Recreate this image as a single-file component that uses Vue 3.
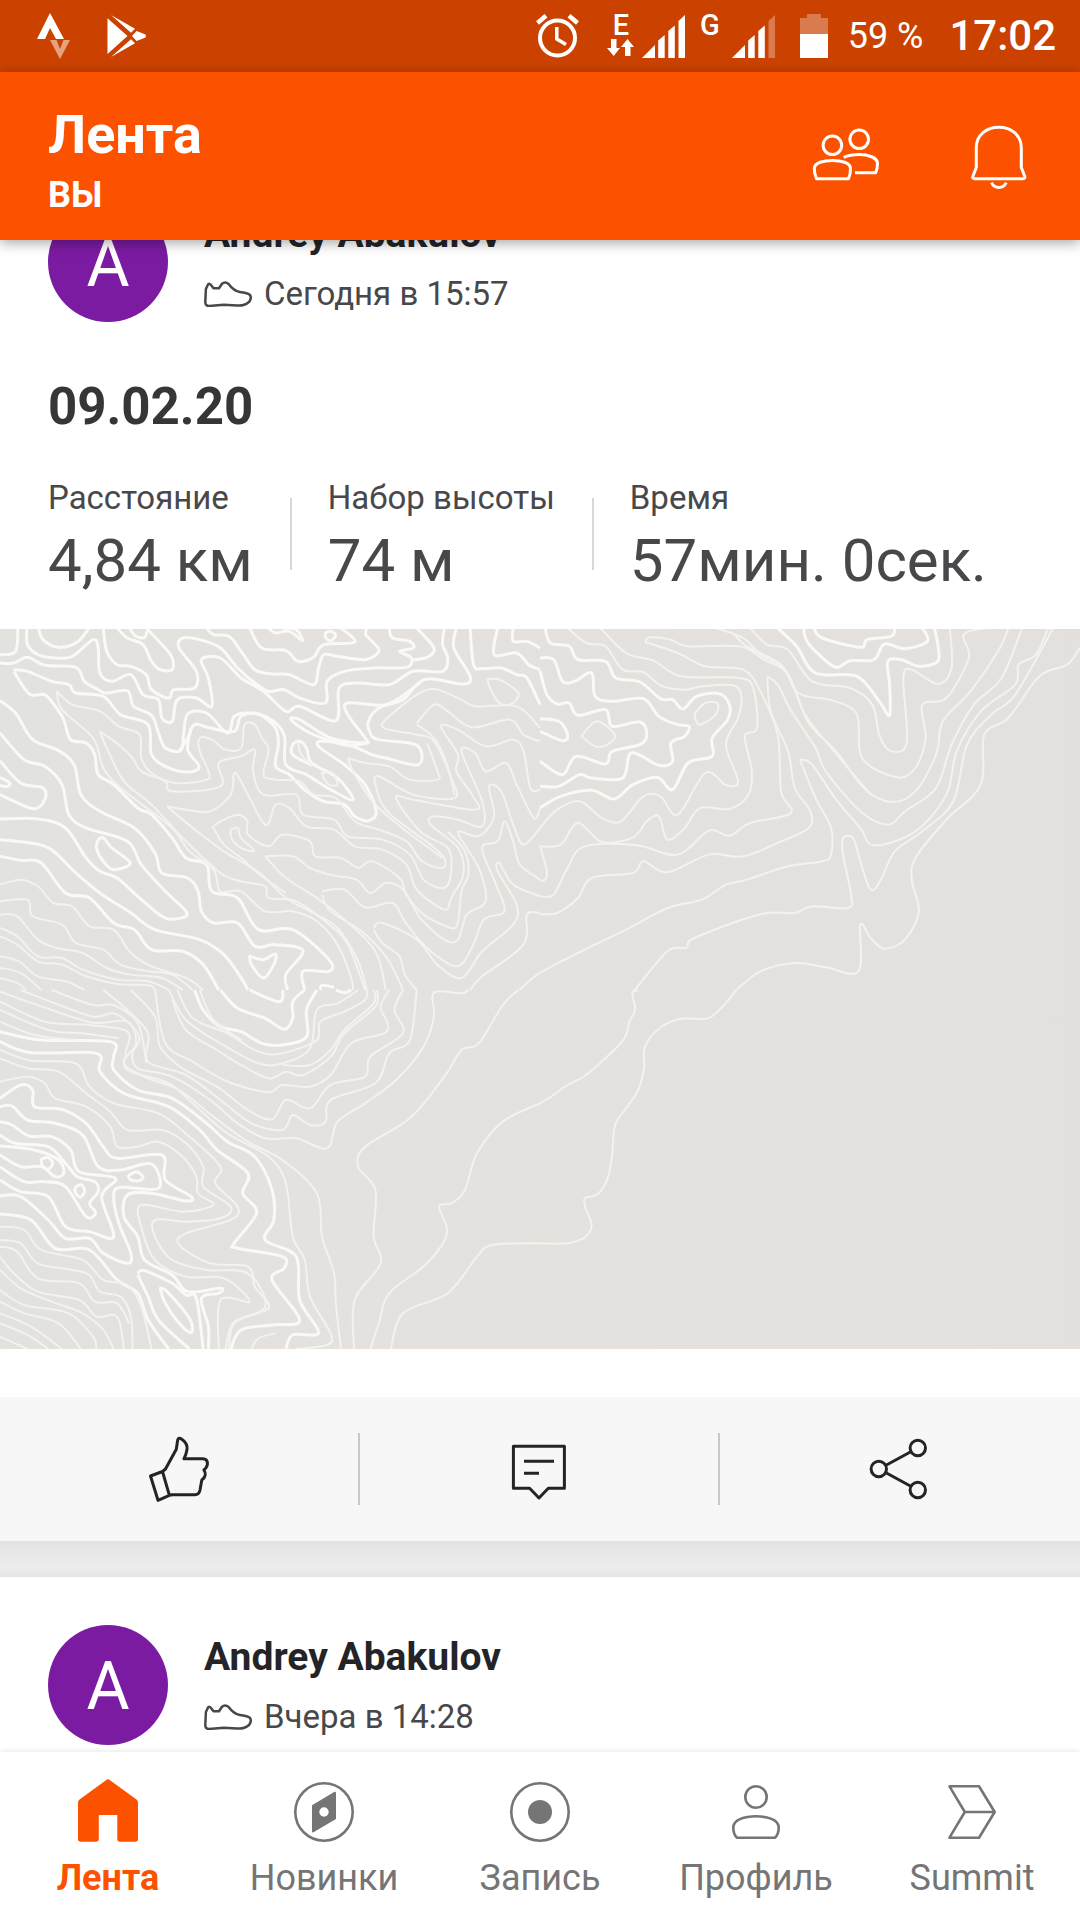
<template>
  <div class="app">
    <div class="status-bar">
      <div class="status-group">
        <svg class="strava" viewBox="0 0 36 48" aria-hidden="true">
          <path d="M1 27 14 1 28 27H20L14 16 9 27Z" fill="#fff" />
          <path d="M14 28H20.500L24 37 27.500 28H34L24 47Z" fill="#fff" opacity=".5" />
        </svg>
        <svg class="play" viewBox="0 0 40 44" aria-hidden="true">
          <path d="M.5 4.300V40L20.500 22ZM4 1 28 14.700 24 18.700ZM4 43 28 29.300 24 25.300ZM25 22 29.500 17 38 20.300Q40 22 38 23.700L29.500 27Z" fill="#fff" />
        </svg>
      </div>
      <div class="status-group">
        <svg class="alarm" viewBox="0 0 43 44" fill="none" stroke="#fff" aria-hidden="true">
          <circle cx="21.500" cy="24" r="17.500" stroke-width="4" />
          <path d="M20.800 13V25L30 30.500" stroke-width="3.500" />
          <path d="M1.500 9 10 1.800M41.500 9 33 1.800" stroke-width="4.500" />
        </svg>
        <div class="network network-data">
          <span>E</span>
          <svg viewBox="0 0 28 17" fill="#fff" aria-hidden="true">
            <path d="M4 0H9.500V9H13L6.700 17 0 9H4ZM18 17H23.500V8H27L20.500 0 14 8H18Z" />
          </svg>
        </div>
        <svg class="signal" viewBox="0 0 43 43" fill="#fff" aria-hidden="true">
          <path v-for="bar in signalBars" :key="bar" :d="bar" />
        </svg>
        <div class="network network-roaming"><span>G</span></div>
        <svg class="signal" viewBox="0 0 43 43" fill="#fff" aria-hidden="true">
          <path v-for="(bar, i) in signalBars" :key="bar" :d="bar" :opacity="i === 3 ? 0.3 : 1" />
        </svg>
        <svg class="battery" viewBox="0 0 28 44" fill="#fff" aria-hidden="true">
          <path d="M0 4H7V0H21V4H28V20H0Z" opacity=".3" />
          <path d="M0 20H28V44H0Z" />
        </svg>
        <span class="percent">59 %</span>
        <span class="clock">17:02</span>
      </div>
    </div>

    <header class="app-bar">
      <div class="titles">
        <h1>Лента</h1>
        <p>ВЫ</p>
      </div>
      <div class="app-actions">
        <button type="button" aria-label="Друзья">
          <svg viewBox="0 0 72 72">
            <circle cx="22.400" cy="25.300" r="9.300" />
            <circle cx="49.200" cy="19.300" r="9.300" />
            <path d="M6.500 58.700C5 55.500 4.300 52 4.300 48.500 4.300 42.500 14 40.500 22.400 40.500 31 40.500 40.500 42.500 40.500 48.500 40.500 52 40 55.500 38.500 58.700Z" />
            <path d="M33.700 37.300C38 35.300 43.500 34.500 49.200 34.500 58 34.500 67.500 37.500 67.500 43.500 67.500 47 67 50 65.700 52.700H45" />
          </svg>
        </button>
        <button type="button" aria-label="Уведомления">
          <svg viewBox="0 0 72 72">
            <path d="M13.300 28C13.300 15 23.500 7.200 35.800 7.200S58.300 15 58.300 28V47.500L61.800 56.500Q62.200 58.700 60 58.700H11.600Q9.400 58.700 9.800 56.500L13.300 47.500Z" />
            <path d="M28.400 62.700C31.500 69 40.200 69 43.200 62.700" />
          </svg>
        </button>
      </div>
    </header>

    <main class="feed">
      <div class="feed-content">
        <article v-for="post in posts" :key="post.id" class="card">
          <div class="card-head">
            <div class="avatar">A</div>
            <div class="author">
              <strong>{{ post.author }}</strong>
              <div class="when">
                <svg viewBox="0 0 48 26" aria-hidden="true">
                  <path d="M1.900 8 4 3.500Q5.500 2 7 4L9.500 7.300H15L17.800 3Q21 0 24.600 3C29 9 33 10.500 36 11 41 12 44 12 46 14Q48 17 45 21C42 23.500 38 25 33 24.500L19.800 23.700 5 25Q1.300 25 1.300 21Z" />
                </svg>
                <span>{{ post.when }}</span>
              </div>
            </div>
          </div>

          <template v-if="post.title">
            <h2>{{ post.title }}</h2>
            <dl class="stats">
              <div v-for="stat in post.stats" :key="stat.label" class="stat">
                <dt>{{ stat.label }}</dt>
                <dd>{{ stat.value }}</dd>
              </div>
            </dl>
            <svg class="map" viewBox="0 0 1080 720" preserveAspectRatio="xMidYMid slice" role="img" aria-label="Карта">
              <defs>
                <linearGradient id="relief" x1="0" x2="1" y1="0" y2="0">
                  <stop offset="0" stop-color="#e2e2de" />
                  <stop offset=".25" stop-color="#e4e1de" />
                  <stop offset="1" stop-color="#e4e0dd" />
                </linearGradient>
              </defs>
              <rect width="1080" height="720" fill="url(#relief)" />
              <g v-for="tile in tiles" :key="tile.transform" :transform="tile.transform">
                <path v-for="line in tile.bold" :key="line" class="contour bold" :d="smooth(line)" />
                <path v-for="line in tile.thin" :key="line" class="contour" :d="smooth(line)" />
              </g>
            </svg>
            <div class="card-actions">
              <button type="button" aria-label="Нравится">
                <svg viewBox="0 0 72 72">
                  <path d="M6.500 43 18.500 38.500 25.400 62.300 14 67.300ZM18.500 38.500 21.500 36 32.300 16.300 33.700 7Q34.500 4 37.500 6C42 9 43.700 12 43 16.500 42.500 20 41.500 23 39.900 25.700H59C64.500 26 65 33 59.900 37 62 40 62 44 57.800 47L56 57Q55 61.700 51 61.700H28.200L25.400 62.300" />
                </svg>
              </button>
              <button type="button" aria-label="Комментировать">
                <svg viewBox="0 0 72 72">
                  <path d="M9.400 13.300H60.400V55.300H44.300L35 65 25.600 55.300H9.400ZM20 28.300H50M20 40.300H35" />
                </svg>
              </button>
              <button type="button" aria-label="Поделиться">
                <svg viewBox="0 0 72 72">
                  <circle cx="14.800" cy="36" r="7.700" />
                  <circle cx="53.800" cy="15" r="7.700" />
                  <circle cx="53.800" cy="57" r="7.700" />
                  <path d="M22 32.200 46.800 18.700M22 39.800 46.800 53.300" />
                </svg>
              </button>
            </div>
          </template>
        </article>
      </div>
    </main>

    <nav class="tab-bar">
      <a v-for="tab in tabs" :key="tab.label" href="#" :class="{ active: tab.active }">
        <svg viewBox="0 0 72 72" aria-hidden="true">
          <path v-for="d in tab.lines" :key="d" :d="d" class="tab-line" />
          <path v-for="d in tab.fills" :key="d" :d="d" class="tab-fill" fill-rule="evenodd" />
        </svg>
        <span>{{ tab.label }}</span>
      </a>
    </nav>
  </div>
</template>

<script setup>
const signalBars = [
  'M0 43H13V30Z',
  'M16.200 43H22.700V20L16.200 25.500Z',
  'M26.300 43H32.800V10.500L26.300 16Z',
  'M36.500 43H43V0L36.500 6Z'
]

const posts = [
  {
    id: 1,
    author: 'Andrey Abakulov',
    when: 'Сегодня в 15:57',
    title: '09.02.20',
    stats: [
      { label: 'Расстояние', value: '4,84 км' },
      { label: 'Набор высоты', value: '74 м' },
      { label: 'Время', value: '57мин. 0сек.' }
    ]
  },
  { id: 2, author: 'Andrey Abakulov', when: 'Вчера в 14:28' }
]

const ring = 'M7.300 36a28.700 28.700 0 1 0 57.400 0a28.700 28.700 0 1 0 -57.400 0Z'

const tabs = [
  {
    label: 'Лента',
    active: true,
    fills: ['M34 4.200Q36 2.300 38 4.200L64.500 23.500Q66 24.500 66 26.500V63Q66 65.700 63.300 65.700H48Q45.300 65.700 45.300 63V39H26.800V63Q26.800 65.700 24 65.700H8.700Q6 65.700 6 63V26.500Q6 24.500 7.500 23.500Z']
  },
  {
    label: 'Новинки',
    lines: [ring],
    fills: ['M24 29.300 46.500 15.800Q48 15.200 48 17V43L25.500 56.200Q24 57 24 55.200ZM31.300 36a4.700 4.700 0 1 0 9.400 0a4.700 4.700 0 1 0 -9.400 0Z']
  },
  {
    label: 'Запись',
    lines: [ring],
    fills: ['M24 36a12 12 0 1 0 24 0a12 12 0 1 0 -24 0Z']
  },
  {
    label: 'Профиль',
    lines: [
      'M25.300 21a10.700 10.700 0 1 0 21.400 0a10.700 10.700 0 1 0 -21.400 0Z',
      'M17 61.700C14.500 59.500 13.300 56 13.300 51.500 13.300 43.500 25 40.300 36 40.300S58.700 43.500 58.700 51.500C58.700 56 57.500 59.500 55 61.700Z'
    ]
  },
  {
    label: 'Summit',
    lines: ['M13.500 10.300H43L58.700 36 43 61.700H13.500L28.800 36ZM28.800 36H58.700']
  }
]

// Contour lines, one "x,y x,y ..." list each; a trailing z closes the line.
const tiles = [
  {
    transform: 'translate(0 -1) scale(.3444 .3333)',
    bold: [
      '0,105 40,105 80,88 130,112 220,118 245,160 285,185 310,195 370,188 388,235 440,262 460,315 480,360 525,368 533,320 545,258 600,255 660,315 680,265 720,255 780,270 825,320 830,410 890,440 960,485 1025,515 980,450 905,405 890,360 870,340 850,350 850,380 905,412',
      '78,0 80,50 110,80 160,90 210,85 270,35 285,60 290,135 325,160 380,140 415,200 460,215 470,270 500,280 515,215 570,210 615,235 605,150 585,95 640,90 700,150 765,190 830,250 870,235 975,278 985,180 1040,165 1130,170 1200,130 1285,130 1300,90 1285,50 1290,0',
      '300,0 310,70 340,110 380,115 425,140 440,185 490,210 505,185 565,180 570,130 520,60 530,30 580,35 640,60 690,120 740,165 780,190 825,185 870,210 945,225 950,160 1000,130 1090,120 1180,118 1195,90 1160,70 1200,60 1190,40 1140,30 1130,0',
      '340,0 370,30 415,50 440,100 465,125 500,125 500,90 475,55 425,0',
      '600,0 620,20 665,25 700,70 740,125 790,138 840,140 910,170 925,120 940,80 980,85 1060,95 1100,70 1085,45 1062,20 1065,0',
      '725,0 760,60 830,68 865,100 910,88 940,50 1030,42 990,0',
      '780,0 800,15 840,10 878,38 860,5 820,0', '945,15 960,10 975,22 960,38 945,28 945,15z',
      '375,0 395,25 420,28 428,5', '112,0 125,35 170,58 225,42 258,0',
      '1210,0 1260,60 1240,88 1200,95', '1325,0 1318,60 1365,145 1345,168 1250,152 1210,170 1170,215 1100,240 1070,280 1075,315 1100,335 1210,352 1215,410 1120,390 1080,380 1010,350 930,340 930,360 1000,410 1060,470 1092,550 1070,578 1030,565 1000,530 940,520 890,490 840,440 800,415 808,350 800,300 750,258 700,265 680,310 610,300 565,290 545,330 520,370',
      '1065,345 1005,352 900,315 845,275 870,275 960,330 1060,345 1060,330 1010,260 1010,225 1120,230 1200,180 1225,158',
      '40,125 80,130 150,160 200,170 220,195 300,205 350,260 430,290 440,380 490,420 550,432 578,415 545,365 555,300',
      '40,130 85,198 130,200 160,235 185,275 205,335 250,345 275,380 285,440 330,470 400,540 440,560 500,630 540,690 600,710 615,790 690,810 750,905 850,905 955,995 955,1030 880,1030 885,1086',
      '0,218 45,255 95,335 165,365 215,410 235,500 290,550 390,600 450,675 470,735 545,750 575,790 585,850 620,885 690,885 740,955 800,950 880,968 830,1040 835,1086',
      '0,315 70,395 130,415 180,470 200,560 250,600 370,640 410,710 480,790 543,855 510,873 470,865 400,805 340,750 290,730 250,690 190,600 110,573 0,573',
      '0,398 60,465 125,480 130,515 95,542 0,500', '0,448 28,465 20,476 0,472',
      '0,635 90,645 150,665 220,735 290,795 380,855 450,905 580,935 650,980 700,1050 720,1086',
      '0,685 60,697 120,705 190,795 260,810 330,885 390,905 440,965 530,970 590,1010 635,1086',
      '285,635 300,630 325,660 378,705 330,725 300,700 280,660 285,635z',
      '725,985 765,995 800,978 795,1010 765,1050 730,1010 725,985z', '930,1086 935,1072 970,1078',
      '1365,0 1375,110 1400,122 1455,120 1500,140 1530,150 1568,230', '1445,0 1435,80 1500,75 1535,110 1568,125', '1490,0 1490,40 1530,40 1568,60',
      '0,80 45,70 52,0'
    ],
    thin: [
      '165,190 210,230 290,250 345,295 405,320 410,390 440,435 510,465 600,455 605,430 580,370 580,330 615,335 655,365 700,360 710,290 740,290 760,330 780,365 765,440 800,455 870,460 910,500 975,510 1030,580 1100,605 1180,640 1225,700 1285,720 1290,690 1250,650 1190,605 1120,545 1090,470 1100,445 1200,500 1320,510 1310,450 1260,340 1210,320 1115,300 1130,265 1240,185 1330,210 1380,235 1500,235 1568,300',
      '165,190 180,245 270,330 300,420 340,470 400,520 500,600 550,670 620,725 640,790 700,790 770,850 850,850 920,880 980,950 1020,1050 1025,1086',
      '290,310 345,350 385,390 410,430 480,460 500,490 640,475 635,405 700,385 740,365 735,430 765,500 860,500 880,560 970,575 1010,625 1110,635 1190,680 1230,755 1290,780 1310,730 1300,660 1220,610 1150,510 1200,515 1380,545 1370,500 1325,430 1330,380 1280,295 1330,305 1410,355 1490,335 1520,370 1540,480 1568,485',
      '290,310 310,360 360,460 440,530 540,640 640,735 700,760 770,775 780,810 860,820 950,885 1010,950 1060,1086',
      '485,535 540,545 610,550 670,500 680,435 705,470 770,590 800,530 840,540 890,595 970,605 1030,655 1110,665 1180,710 1210,785 1290,845 1310,810 1345,740 1330,660 1250,590 1260,565 1330,575 1400,595 1400,520 1340,370 1380,375 1410,430 1470,405 1500,470 1550,570 1568,540',
      '485,535 560,600 650,670 700,700 760,740 830,810 900,850 980,900 1040,1000 1065,1086',
      '615,600 640,580 690,560 718,580 720,620 780,655 820,620 900,640 915,685 990,690 1040,720 1080,700 1160,750 1180,800 1230,860 1310,900 1330,880 1340,790 1360,740 1350,670 1300,610',
      '620,600 650,650 700,690 760,745 830,795', '670,605 690,600 700,630 738,668 700,660 672,630 670,605z',
      '770,685 850,685 900,720 965,742 1035,755 1075,795 1120,765 1170,785 1220,870 1290,935 1330,935 1355,860 1410,820 1390,720 1330,615 1380,625 1410,610 1435,560 1420,475 1455,490 1490,590 1520,650 1568,600',
      '770,685 830,750 920,810 1000,875 1090,970 1120,1086', '935,790 1000,785 1060,838 1140,825 1175,880 1240,960 1325,1015 1370,960 1405,875 1465,850 1440,770 1400,660 1445,640 1465,580 1490,640 1510,710 1568,755',
      '935,800 960,850 1050,910 1120,985 1150,1040 1170,1086', '1085,900 1110,885 1210,935 1270,1010 1340,1050 1400,970 1490,890 1500,830 1445,730 1450,705 1490,770 1568,805',
      '1085,905 1110,945 1160,985 1175,1040 1210,1086', '1365,1086 1400,1045 1520,950 1530,860 1568,855',
      '1415,155 1450,155 1505,195 1485,228 1450,225 1425,185 1415,155z', '1210,285 1260,230 1300,250 1370,298 1480,275 1520,320 1568,340',
      '1210,290 1260,330 1295,400 1320,500', '1010,390 1060,405 1130,415 1190,455 1270,455 1270,430 1240,345', '1010,390 1030,440 1090,530 1180,610 1285,690',
      '935,435 965,435 980,470 955,470 940,450 935,435z', '865,345 875,380 905,412',
      '0,770 60,755 110,775 155,825 210,835 260,895 330,905 380,975 440,1015 540,1050 590,1086',
      '0,820 80,815 95,865 180,890 220,945 300,965 350,1010 430,1030 500,1040 560,1086',
      '0,860 50,865 110,935 165,960 240,975 310,1020 380,1040 470,1050 530,1086', '0,900 50,925 110,985 180,990 240,1025 340,1055 430,1060 490,1086',
      '0,925 50,950 110,1000 180,1010 250,1045 340,1068 430,1072 450,1086', '0,985 55,1000 110,1045 190,1060 245,1086', '0,1020 60,1035 120,1086', '0,1050 50,1065 75,1086'
    ]
  },
  {
    transform: 'translate(540 -1) scale(.3444 .3333)',
    bold: [
      '15,0 30,45 85,55 110,95 190,100 220,150 290,162 350,212 385,215 415,243 455,205 520,197 550,230 545,275 500,330 500,385 430,405 385,485 340,448 270,470 215,513 150,487 60,505 0,540',
      '0,90 40,95 65,160 100,160 150,135 160,205 210,220 300,212 345,265 400,290 433,295 420,325 380,345 385,400 345,412 265,375 240,450 150,450 115,440 55,475 0,475',
      '0,128 20,200 50,228 85,225 110,262 190,245 210,295 290,282 310,320 290,350 210,370 190,408 105,385 65,440 0,400',
      '0,272 55,280 80,320 65,338 0,310',
      '690,0 745,55 800,135 920,145 985,220 1015,262 1015,170 1010,100 1050,95 1100,115 1155,100 1155,50 1145,0',
      '765,0 775,40 810,80 860,118 900,98 970,95 1000,48 1060,62 1125,40 1110,0', '795,0 820,30 930,58 950,35 1020,25 1030,0'
    ],
    thin: [
      '80,0 135,45 190,55 240,125 300,132 350,172 420,185 470,175 560,172 585,205 575,270 540,350 575,460 540,472 480,435 400,560 350,505 300,505 235,580 180,570 115,520 50,545 0,600',
      '175,0 250,75 330,98 410,145 580,150 620,185 630,300 595,325 615,430 605,500 550,543 465,540 420,600 370,635 345,565 310,580 270,628 180,642 110,585 60,650 0,655',
      '305,40 320,28 380,35 430,55 580,55 650,95 720,140 780,285 860,370 940,480 1020,522 1090,490 1150,380 1170,280 1250,190 1330,70 1360,0',
      '305,42 400,75 480,115 590,125 640,190 690,320 700,490 728,555 610,585 550,623 490,608 400,680 280,652 130,655 80,720 40,800 0,805',
      '510,0 590,30 640,80 715,130 770,260 850,365 960,500',
      '610,0 660,50 720,65 790,160 900,180 965,230 985,320 1015,368 1065,345 1055,150 1080,125 1155,168 1195,120 1190,0',
      '560,15 600,55 700,110 750,195 850,218 920,260 935,390 1035,448 1090,420 1120,330 1110,230 1180,210 1245,90 1230,20 1300,0',
      '660,145 690,170 730,250 800,360 830,430 930,550 1010,590 1060,550 1150,480 1195,350 1260,230 1340,150 1400,0',
      '660,145 670,250 720,370 740,480 785,550 780,600 700,640 590,685 490,680 370,733 300,700 270,735 150,750 110,810 50,855 0,858',
      '755,395 790,410 860,515 930,600 970,652 1090,610 1180,500 1210,370 1280,250 1380,170 1390,110 1440,80 1475,0',
      '755,395 800,510 845,600 845,680 820,700 720,715 600,755 540,770 470,815 370,840 250,905 120,970 0,1035 -60,1086',
      '275,1086 370,970 425,960 440,935 560,885 660,855 740,855 790,835 895,840 903,800 880,680 880,630 910,632 930,700 960,785 990,755 1030,670 1110,610 1200,520 1240,350 1310,260 1380,200 1490,0',
      '570,1086 640,1030 740,1005 830,1018 925,1030 930,890 960,930 1000,962 1060,935 1100,850 1080,760 1090,690 1180,575 1280,470 1290,320 1360,270 1450,145 1530,110 1568,60',
      '450,255 480,225 515,225 510,260 465,290 450,270 450,255z', '120,325 165,280 218,325 170,358 120,325z', '0,655 20,730 15,755 0,758'
    ]
  },
  {
    transform: 'translate(0 361) scale(.3444 .3333)',
    bold: [
      '0,325 60,285 95,300 100,350 180,358 250,400 300,470 340,505 470,495 480,570 555,620 540,633 440,610 370,615 360,680 400,740 420,810 500,855 545,905 640,895 635,910 585,925 605,1010 605,1077',
      '0,350 35,348 80,390 160,400 240,435 285,530 350,540 440,522 460,595 350,592 330,620 345,700 380,790 370,820 300,790 260,745 190,745 140,690 60,620 0,618',
      '0,395 35,405 85,438 150,440 205,480 230,545 335,565 295,620 330,740 260,725 190,710 140,620 60,605 0,570',
      '0,435 45,460 140,470 190,520 225,560 275,575 285,605 260,640 278,668 250,680 190,590 130,575 70,575 0,530',
      '0,495 60,530 120,530 160,560 185,550 170,510 100,480 0,468', '120,508 140,502 153,520 140,538 122,525 120,508z',
      '220,590 238,585 245,605 232,622 218,605 220,590z', '372,558 395,545 415,560 405,572 380,570 372,558z',
      '0,672 90,690 160,775 260,780 340,870 400,910 430,990 490,1077',
      '400,850 420,842 500,880 540,915 570,925 590,1077', '400,855 430,920 460,990 550,1077', '465,895 485,905 550,985 555,1028 520,1000 480,940 465,895z',
      '640,0 690,55 770,85 825,118 850,85 850,35 885,0', '725,0 810,35 822,0', '565,0 590,60 640,110 700,125 760,160 820,165 890,140 890,60 920,0',
      '975,0 1000,8 1020,0', '0,125 120,150 320,155 330,200 330,240 400,300 500,325 600,400 660,455 740,500 790,600 795,690 770,750 860,800 870,930 925,1028 850,1035 830,1077',
      '0,155 90,188 280,190 290,245 360,310 490,350 580,420 630,480 720,550 705,610 745,668 680,760 690,775 820,800 825,835 790,870 870,990 790,1005 700,1020 670,1077'
    ],
    thin: [
      '0,180 90,212 220,220 260,290 330,340 460,370 550,440 640,530 625,580 690,650 670,690 540,730 520,765 610,820 720,830 740,890 780,955 680,995 655,1077',
      '0,205 80,235 170,245 250,310 320,365 370,420 470,420 540,460 590,530 590,590 670,650 640,685 540,695 450,690 450,740 500,810 600,840 720,850 770,950 680,1000 665,1077',
      '0,275 80,260 130,280 160,325 250,350 320,410 340,470 400,470 460,455 530,500 570,560 575,610 620,645 530,665 410,645 410,710 450,810 540,860 650,865 725,935 640,930 635,1077',
      '490,0 540,90 640,160 750,220 820,220 900,175 920,60 980,40 1040,0', '515,0 560,85 660,130 750,185 820,190 920,150 930,95 1000,65 1060,30 1065,0', '580,0 620,90 700,150',
      '1085,0 1085,40 1000,120 960,180 900,225 820,225', '1095,0 1090,50 1000,130 960,200 880,255 830,245 780,265 700,225 630,180 540,120 500,30',
      '450,0 480,160 560,215 650,270 740,300 790,305 820,285 900,290 960,255 1020,160 1115,130 1125,100 1105,50 1130,0',
      '380,0 450,80 465,170 530,235 630,290 720,360 790,388 830,330 900,355 960,285 1060,260 1075,200 1170,130 1145,60 1170,0',
      '300,0 370,60 430,130 430,215 540,255 640,330 730,400 820,420 850,375 900,405 945,395 960,330 1090,280 1130,190 1190,150 1210,0',
      '1360,0 1340,10 1260,8 1260,80 1230,170 1150,270 1060,340 980,395 950,475 860,445 770,445 690,400 610,330 500,260 400,235 385,190 405,150 385,110 330,70 270,80 160,40 60,0',
      '0,5 150,60 270,98 370,95 395,160 360,220 430,265 520,300 620,380 720,455 820,510 920,610 935,740 970,850 975,940 990,1077',
      '0,35 130,95 260,105 370,125 365,190 370,240 490,280 570,350 660,430 780,500 830,580 850,740 885,810 900,920 960,1030 950,1065 860,1077',
      '0,60 140,120 240,130 345,145', '0,95 100,135 220,150', '150,0 270,45 330,45 400,100 425,220',
      '1505,0 1460,45 1390,160 1340,180 1290,260 1190,385 1060,470 1040,530 1090,600 1085,740 1105,820 1030,930 1028,1077',
      '1568,340 1460,395 1385,490 1350,600 1310,640 1275,650 1298,730 1240,820 1130,910 1100,1000 1075,1077',
      '1568,760 1430,765 1385,800 1300,910 1170,970 1135,1077',
      '0,710 70,720 120,780 240,810 300,870 370,885 410,950 440,1077', '0,750 60,760 110,820 210,840 260,855 290,905 350,920 380,980 385,1077',
      '0,770 50,785 110,865 230,880 275,935 340,940 375,1000', '0,800 40,850 110,905 230,930 280,980 340,980 360,1077', '0,840 60,895 150,935 240,970 300,1020 330,1077',
      '0,900 70,945 200,970 270,1040 280,1077', '0,935 70,970 170,1000 235,1077', '0,970 90,1010 180,1077', '0,1000 80,1035 140,1077', '0,1040 80,1077',
      '730,1077 750,1045 800,1030'
    ]
  },
  {
    transform: 'translate(540 361) scale(.3444 .3333)',
    bold: [],
    thin: [
      '285,0 268,10 276,58 260,95 245,145 190,205 130,258 80,285 35,318 0,340',
      '570,0 530,50 485,86 410,86 350,112 305,170 302,235 285,300 250,355 218,405 210,490 198,560 175,605 150,620 130,624 132,655 150,705 130,742 80,760 0,760'
    ]
  }
]

// Catmull-Rom spline through the listed points, written as cubic segments.
function smooth(line) {
  const closed = line.endsWith('z')
  const pts = line.replace('z', '').split(' ').map(p => p.split(',').map(Number))
  let d = `M${pts[0][0]} ${pts[0][1]}`
  for (let i = 0; i < pts.length - 1; i++) {
    const a = pts[i - 1] || pts[i]
    const b = pts[i]
    const c = pts[i + 1]
    const e = pts[i + 2] || c
    d += `C${b[0] + (c[0] - a[0]) / 6} ${b[1] + (c[1] - a[1]) / 6} ${c[0] - (e[0] - b[0]) / 6} ${c[1] - (e[1] - b[1]) / 6} ${c[0]} ${c[1]}`
  }
  return closed ? d + 'Z' : d
}
</script>

<style>
body {
  margin: 0;
  background: #fff;
}
</style>

<style scoped>
.app {
  display: flex;
  flex-direction: column;
  height: 100vh;
  overflow: hidden;
  font-family: Roboto, "Noto Sans", sans-serif;
  color: #48484a;
}

h1, h2, p, dl, dt, dd { margin: 0; }

button {
  padding: 0;
  border: none;
  background: none;
  cursor: pointer;
}

svg { display: block; flex: none; }

.status-bar {
  flex: none;
  display: flex;
  align-items: center;
  justify-content: space-between;
  height: 72px;
  padding: 0 24px 0 36px;
  background: #cb4200;
  color: #fff;
}

.status-group {
  display: flex;
  align-items: center;
}

.strava { width: 36px; height: 48px; }
.play { width: 40px; height: 44px; margin-left: 35px; }
.alarm { width: 43px; height: 44px; }
.signal { width: 43px; height: 43px; }
.battery { width: 28px; height: 44px; margin-left: 25px; }

.network {
  display: flex;
  flex-direction: column;
  align-items: center;
  height: 44px;
  font-size: 29px;
  line-height: 22px;
  font-weight: 500;
}

.network-data { width: 28px; margin: 0 7px 0 28px; gap: 3px; }
.network-data svg { width: 28px; height: 17px; }
.network-roaming { margin: 0 12px 0 15px; }

.percent {
  margin-left: 20px;
  font-size: 36px;
  line-height: 48px;
}

.clock {
  margin-left: 26px;
  font-size: 42px;
  line-height: 48px;
  font-weight: 500;
}

.app-bar {
  position: relative;
  z-index: 1;
  flex: none;
  display: flex;
  justify-content: space-between;
  align-items: center;
  padding: 0 45px 0 48px;
  background: #fc5200;
  color: #fff;
  box-shadow: 0 3px 12px rgba(0, 0, 0, 0.35);
}

.titles { padding: 33px 0 21px; }

.titles h1 {
  font-size: 54px;
  line-height: 60px;
  font-weight: 700;
}

.titles p {
  margin-top: 6px;
  font-size: 36px;
  line-height: 48px;
  font-weight: 700;
}

.app-actions { display: flex; gap: 81px; }

.app-actions svg {
  width: 72px;
  height: 72px;
  fill: none;
  stroke: #fff;
  stroke-width: 3;
  stroke-linejoin: round;
}

.feed {
  flex: 1;
  min-height: 0;
  overflow: hidden;
}

/* the feed is scrolled part of the way into the first card */
.feed-content { margin-top: -86px; }

.card + .card {
  padding-top: 36px;
  background: linear-gradient(#e2e2e2, #ededed 70%, #e4e4e4) top / 100% 36px no-repeat;
}

.card-head {
  display: flex;
  gap: 36px;
  padding: 48px 48px 0;
}

.avatar {
  flex: none;
  width: 120px;
  height: 120px;
  border-radius: 50%;
  background: #7b1ba2;
  color: #fff;
  font-size: 66px;
  line-height: 124px;
  text-align: center;
}

.author { padding-top: 8px; }

.author strong {
  display: block;
  color: #242428;
  font-size: 39px;
  line-height: 48px;
  font-weight: 700;
}

.when {
  display: flex;
  align-items: center;
  gap: 12px;
  margin-top: 15px;
  font-size: 33px;
  line-height: 42px;
}

.when svg {
  width: 48px;
  height: 26px;
  fill: none;
  stroke: #48484a;
  stroke-width: 2.5;
  stroke-linejoin: round;
}

.card h2 {
  margin: 55px 48px 0;
  color: #363638;
  font-size: 51px;
  line-height: 60px;
  font-weight: 700;
}

.stats {
  display: flex;
  padding: 40px 48px 32px;
}

.stat {
  position: relative;
  white-space: nowrap;
}

.stat:not(:last-child) { padding-right: 75px; }

.stat:not(:last-child)::after {
  content: "";
  position: absolute;
  top: 21px;
  right: 36px;
  width: 2px;
  height: 72px;
  background: #d8d8d8;
}

.stat dt {
  font-size: 33px;
  line-height: 42px;
}

.stat dd {
  margin-top: 6px;
  font-size: 60px;
  line-height: 72px;
}

.map {
  width: 100%;
  height: 720px;
}

.contour {
  fill: none;
  stroke: #f4f2ef;
  stroke-width: 2px;
  stroke-linejoin: round;
  vector-effect: non-scaling-stroke;
}

.contour.bold { stroke: #faf9f6; stroke-width: 3px; }

.card-actions {
  display: grid;
  grid-template-columns: repeat(3, 1fr);
  margin-top: 48px;
  background: #f7f7f7;
}

.card-actions button {
  display: flex;
  justify-content: center;
  padding: 36px 0;
}

.card-actions button:not(:last-child) {
  background: linear-gradient(#c8c8c8, #c8c8c8) right center / 2px 72px no-repeat;
}

.card-actions svg {
  width: 72px;
  height: 72px;
  fill: none;
  stroke: #242424;
  stroke-width: 3;
  stroke-linejoin: round;
}

.tab-bar {
  position: relative;
  z-index: 1;
  flex: none;
  display: grid;
  grid-template-columns: repeat(5, 1fr);
  background: #fff;
  box-shadow: 0 0 6px rgba(0, 0, 0, 0.12);
}

.tab-bar a {
  display: flex;
  flex-direction: column;
  align-items: center;
  gap: 6px;
  padding: 24px 0 18px;
  color: #757575;
  font-size: 36px;
  line-height: 48px;
  text-decoration: none;
}

.tab-bar a.active {
  color: #fc5200;
  font-weight: 700;
}

.tab-bar svg { width: 72px; height: 72px; }

.tab-line {
  fill: none;
  stroke: currentColor;
  stroke-width: 2.6;
  stroke-linejoin: round;
}

.tab-fill { fill: currentColor; }
</style>
